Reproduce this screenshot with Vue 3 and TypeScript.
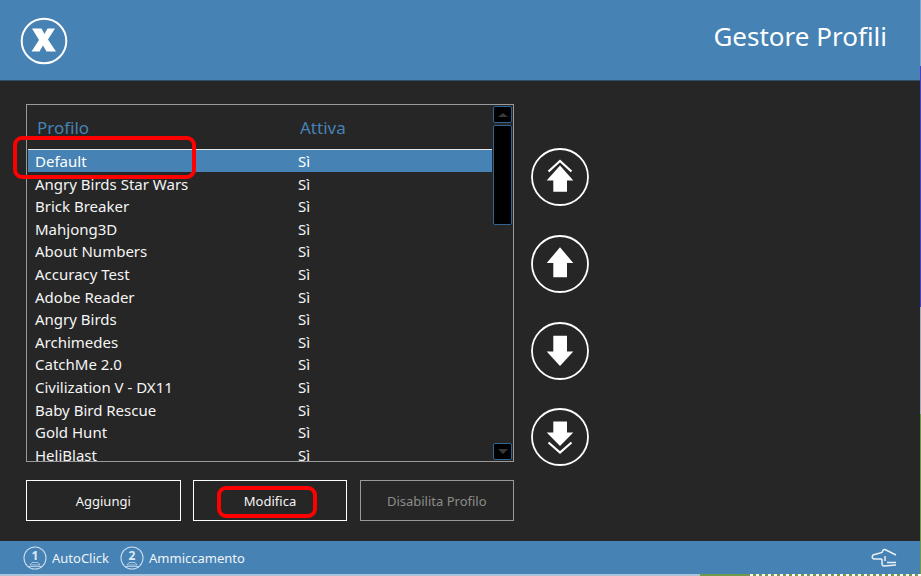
<template>
  <div class="page">
    <header class="top">
      <svg class="logo" width="48" height="48" viewBox="0 0 48 48">
        <circle cx="24" cy="24" r="22.3" fill="none" stroke="#fff" stroke-width="2" />
        <path d="M12 11.500h9.500l3 5.500 3-5.500h7.500l-7 11 8 12h-9.500l-3.500-6-3.500 6h-8l7.500-11.500z" fill="#fff" />
      </svg>
      <h1 class="title">Gestore Profili</h1>
    </header>

    <main class="content">
      <div class="left">
        <div class="listbox">
          <div class="table">
            <div class="head">
              <span class="col-name head-name">Profilo</span>
              <span class="col-active head-active">Attiva</span>
            </div>
            <div class="rows">
              <div
                v-for="(item, i) in profiles"
                :key="item"
                class="row"
                :class="{ selected: i === 0 }"
              >
                <span class="col-name">{{ item }}</span>
                <span class="col-active">Sì</span>
              </div>
            </div>
          </div>
          <div class="scrollbar">
            <div class="scroll-btn"><span class="tri up"></span></div>
            <div class="thumb"></div>
            <div class="scroll-space"></div>
            <div class="scroll-btn"><span class="tri down"></span></div>
          </div>
        </div>
        <div class="actions">
          <button class="btn">Aggiungi</button>
          <button class="btn">Modifica</button>
          <button class="btn disabled">Disabilita Profilo</button>
        </div>
      </div>

      <div class="arrows">
        <button v-for="a in arrows" :key="a" class="round">
          <svg width="58" height="58" viewBox="0 0 58 58">
            <circle cx="29" cy="29" r="28" fill="none" stroke="#fff" stroke-width="1.800" />
            <path v-if="a === 'top'" d="M15.700 32.500 29 17.500 42.300 32.500H36V43.700H22.300V32.500z" fill="#fff" />
            <path v-if="a === 'top'" d="M17.500 23.500 29 13 40.500 23.500" fill="none" stroke="#fff" stroke-width="2.200" />
            <path v-if="a === 'up'" d="M15.700 28 29 12.300 42.300 28H36V42.300H22.300V28z" fill="#fff" />
            <path v-if="a === 'down'" d="M15.700 29.500 29 44 42.300 29.500H36V13.700H22.300V29.500z" fill="#fff" />
            <path v-if="a === 'bottom'" d="M15.700 24.500 29 38 42.300 24.500H36V13.400H22.300V24.500z" fill="#fff" />
            <path v-if="a === 'bottom'" d="M17.500 34.500 29 44.500 40.500 34.500" fill="none" stroke="#fff" stroke-width="2.200" />
          </svg>
        </button>
      </div>
    </main>

    <footer class="bottom">
      <div class="hint">
        <svg width="24" height="24" viewBox="0 0 24 24">
          <circle cx="12" cy="12" r="11" fill="none" stroke="#c9dcec" stroke-width="1.100" />
          <path d="M9 16.500h6l2 2.500H7zM5 20.500h14" fill="none" stroke="#d5e3ef" stroke-width="0.700" />
        </svg>
        <b class="num">1</b>
        <span>AutoClick</span>
      </div>
      <div class="hint">
        <svg width="24" height="24" viewBox="0 0 24 24">
          <circle cx="12" cy="12" r="11" fill="none" stroke="#c9dcec" stroke-width="1.100" />
          <path d="M9 16.500h6l2 2.500H7zM5 20.500h14" fill="none" stroke="#d5e3ef" stroke-width="0.700" />
        </svg>
        <b class="num">2</b>
        <span>Ammiccamento</span>
      </div>
      <svg class="hand" width="26" height="20" viewBox="0 0 26 20">
        <path d="M25 7 14 1.500Q12 1 11 4.500L2 7Q0 10 3 11H11M11 11V15Q11 18 13 18L25 17M16 14.500H25M14 8 14 13" fill="none" stroke="#e6eff6" stroke-width="1.500" />
      </svg>
    </footer>

    <!-- segni rossi sopra lo screenshot -->
    <div class="mark mark-default"></div>
    <div class="mark mark-edit"></div>

    <!-- bordo del desktop che si vede a destra e in basso -->
    <div class="edge-right"></div>
    <div class="edge-bottom"></div>
  </div>
</template>

<script setup lang="ts">
const profiles: string[] = [
  "Default",
  "Angry Birds Star Wars",
  "Brick Breaker",
  "Mahjong3D",
  "About Numbers",
  "Accuracy Test",
  "Adobe Reader",
  "Angry Birds",
  "Archimedes",
  "CatchMe 2.0",
  "Civilization V - DX11",
  "Baby Bird Rescue",
  "Gold Hunt",
  "HeliBlast",
];

const arrows = ["top", "up", "down", "bottom"];
</script>

<style scoped>
.page {
  width: 921px;
  height: 576px;
  position: relative;
  overflow: hidden;
  display: flex;
  flex-direction: column;
  background-color: #262626;
  font-family: "Noto Sans", "Open Sans", sans-serif;
  color: #fff;
}

.top {
  height: 81px;
  box-sizing: border-box;
  flex-shrink: 0;
  display: flex;
  align-items: center;
  justify-content: space-between;
  padding: 0 34px 0 20px;
  background-color: #4682b4;
  border-bottom: 1px solid #2f4d66;
}

.title {
  margin: 0 0 8px;
  font-size: 26px;
  font-weight: 400;
}

.logo {
  margin-top: 1px;
}

.content {
  flex: 1;
  display: flex;
  padding: 23px 0 0 26px;
}

.left {
  width: 488px;
}

.listbox {
  height: 358px;
  box-sizing: border-box;
  display: flex;
  border: 1px solid #9a9a9a;
  overflow: hidden;
}

.table {
  flex: 1;
  padding-left: 1px;
}

.head {
  height: 44px;
  display: flex;
  align-items: center;
  padding-top: 1px;
  box-sizing: border-box;
  color: #4682b4;
  font-size: 17px;
}

.head-active {
  padding-left: 2px;
}

.row {
  height: 22.6px;
  line-height: 24px;
  display: flex;
  font-size: 15px;
  color: #f5f5f5;
}

.row.selected {
  background-color: #4682b4;
  box-shadow: inset 0 1px 0 #e8e8e8;
  color: #fff;
}

.col-name {
  width: 270px;
  padding-left: 7px;
  box-sizing: border-box;
  white-space: nowrap;
}

.head .head-name {
  padding-left: 9px;
}

.col-active {
  flex: 1;
}

.scrollbar {
  width: 19px;
  margin: 1px;
  display: flex;
  flex-direction: column;
  gap: 2px;
}

.scroll-btn {
  height: 17px;
  box-sizing: border-box;
  flex-shrink: 0;
  display: flex;
  align-items: center;
  justify-content: center;
  background-color: #000;
  border: 1px solid #2f6595;
  border-radius: 2px;
}

.thumb {
  height: 100px;
  box-sizing: border-box;
  background-color: #000;
  border: 1px solid #2f6595;
  border-radius: 2px;
}

.scroll-space {
  flex: 1;
}

.tri {
  width: 0;
  height: 0;
  border-left: 5px solid transparent;
  border-right: 5px solid transparent;
}

.tri.up {
  border-bottom: 4px solid #3a3a3a;
}

.tri.down {
  border-top: 5px solid #3a3a3a;
}

.actions {
  display: flex;
  justify-content: space-between;
  margin-top: 18px;
}

.btn {
  width: 154.5px;
  height: 41px;
  box-sizing: border-box;
  background: transparent;
  border: 1px solid #fff;
  color: #f5f5f5;
  font-family: inherit;
  font-size: 13px;
}

.btn.disabled {
  border-color: #999;
  color: #8c8c8c;
}

.arrows {
  margin: 44.3px 0 0 17px;
  display: flex;
  flex-direction: column;
  gap: 28.7px;
}

.round {
  width: 58px;
  height: 58px;
  padding: 0;
  border: none;
  background: transparent;
}

.round svg {
  display: block;
}

.bottom {
  height: 33px;
  margin-bottom: 2px;
  flex-shrink: 0;
  display: flex;
  align-items: center;
  gap: 11px;
  padding: 0 24px 0 23px;
  background-color: #4682b4;
  font-size: 13px;
  color: #eef4f9;
}

.hint {
  position: relative;
  display: flex;
  align-items: center;
  gap: 5px;
}

.num {
  position: absolute;
  left: 0;
  width: 24px;
  top: 2px;
  text-align: center;
  font-size: 12px;
  line-height: 15px;
  color: #dfeaf3;
}

.hand {
  margin-left: auto;
}

.mark {
  position: absolute;
  box-sizing: border-box;
  border: 4px solid #f00;
  border-radius: 9px;
}

.mark-default {
  left: 13px;
  top: 136px;
  width: 183px;
  height: 43px;
}

.mark-edit {
  left: 217px;
  top: 486px;
  width: 100px;
  height: 32px;
}

.edge-right {
  position: absolute;
  right: 0;
  top: 0;
  width: 1px;
  height: 576px;
  background: linear-gradient(
    to bottom,
    #7fa7d0 0 66px,
    #4a3fc8 66px 307px,
    #a8adb5 307px 414px,
    #6f9a4a 414px 576px
  );
}

.edge-bottom {
  position: absolute;
  left: 0;
  bottom: 0;
  width: 921px;
  height: 2px;
  background:
    repeating-linear-gradient(to right, #fff 0 3px, #6f9a4a 3px 6px) 750px 0 / 171px 2px no-repeat,
    linear-gradient(to right, #a9c4db 0 700px, #6f9a4a 700px 921px);
}
</style>
